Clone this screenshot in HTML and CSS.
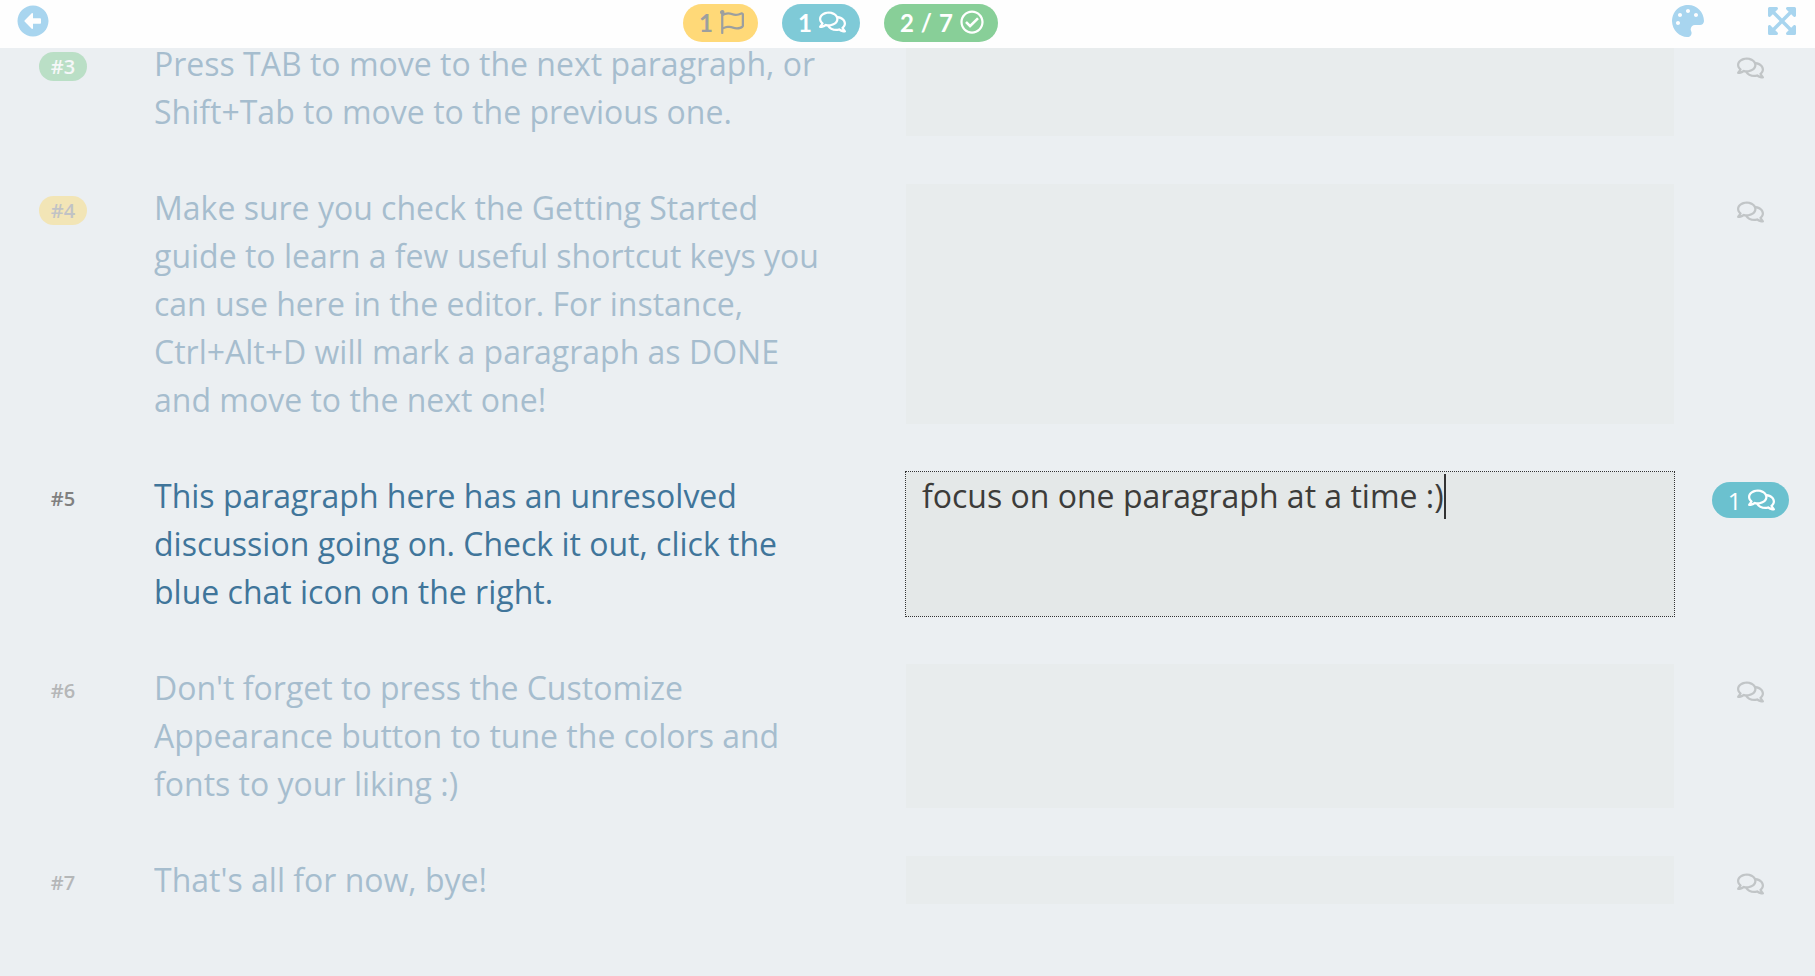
FILE: index.html
```
<!DOCTYPE html>
<html lang="en">
<head>
    <meta charset="UTF-8">
    <meta name="viewport" content="width=device-width, initial-scale=1.0">
    <title>Translation Editor</title>
    <link rel="stylesheet" href="styles.css">
</head>
<body>
    <svg class="sprite" aria-hidden="true">
        <symbol id="comments" viewBox="0 0 576 512"><path d="M532 386.2c27.5-27.1 44-61.1 44-98.2 0-80-76.5-146.1-176.2-157.9C368.3 72.5 294.3 32 208 32 93.1 32 0 103.6 0 192c0 37 16.5 71 44 98.2-15.3 30.7-37.3 54.5-37.7 54.9-6.3 6.7-8.1 16.5-4.4 25 3.6 8.5 12 14 21.2 14 53.5 0 96.7-20.2 125.2-38.8 9.2 2.1 18.7 3.7 28.4 4.9C208.1 407.6 281.8 448 368 448c20.8 0 40.8-2.4 59.8-6.8C456.3 459.7 499.4 480 553 480c9.2 0 17.5-5.5 21.2-14 3.6-8.5 1.9-18.3-4.4-25-.4-.3-22.5-24.1-37.8-54.8zm-392.8-92.3L122.1 305c-14.1 9.1-28.5 16.3-43.1 21.4 2.7-4.7 5.4-9.7 8-14.8l15.5-31.1L77.7 256C64.2 242.6 48 220.7 48 192c0-60.7 73.3-112 160-112s160 51.3 160 112-73.3 112-160 112c-16.5 0-33-1.9-49-5.6l-19.8-4.5zM498.3 352l-24.7 24.4 15.5 31.1c2.6 5.1 5.3 10.1 8 14.8-14.6-5.1-29-12.3-43.1-21.4l-17.1-11.1-19.9 4.6c-16 3.7-32.5 5.6-49 5.6-54 0-102.2-20.1-131.3-49.7C338 339.5 416 272.9 416 192c0-3.4-.4-6.7-.7-10C479.7 196.5 528 238.8 528 288c0 28.7-16.2 50.6-29.7 64z"/></symbol>
    </svg>

    <header class="topbar">
        <a href="#" class="tool" aria-label="Back">
            <svg class="icon-lg" viewBox="0 0 512 512"><path d="M256 504C119 504 8 393 8 256S119 8 256 8s248 111 248 248-111 248-248 248zm116-292H256v-70.9c0-10.7-13-16.1-20.5-8.5L121.2 247.5c-4.7 4.7-4.7 12.2 0 16.9l114.3 114.9c7.6 7.6 20.5 2.2 20.5-8.5V300h116c6.6 0 12-5.4 12-12v-64c0-6.6-5.4-12-12-12z"/></svg>
        </a>
        <div class="stats">
            <button class="stat flagged" aria-label="1 flagged">1
                <svg class="icon" viewBox="0 0 512 512"><path d="M336.174 80c-49.132 0-93.305-32-161.913-32-31.301 0-58.303 6.482-80.721 15.168a48.04 48.04 0 0 0 2.142-20.727C93.067 19.575 74.167 1.594 51.201.104 23.242-1.71 0 20.431 0 48c0 17.764 9.657 33.262 24 41.562V496c0 8.837 7.163 16 16 16h16c8.837 0 16-7.163 16-16v-83.443C109.869 395.28 143.259 384 199.826 384c49.132 0 93.305 32 161.913 32 58.479 0 101.972-22.617 128.548-39.981C503.846 367.161 512 352.051 512 335.855V95.937c0-34.459-35.264-57.768-66.904-44.117C409.193 67.309 371.641 80 336.174 80zM464 336c-21.783 15.412-60.824 32-102.261 32-59.945 0-102.002-32-161.913-32-43.361 0-96.379 9.403-127.826 24V128c21.784-15.412 60.824-32 102.261-32 59.945 0 102.002 32 161.913 32 43.271 0 96.32-17.366 127.826-32v240z"/></svg>
            </button>
            <button class="stat discussed" aria-label="1 discussion">1
                <svg class="icon wide"><use href="#comments"/></svg>
            </button>
            <button class="stat done" aria-label="2 of 7 done">
                <span>2</span> <span>/</span> <span>7</span>
                <svg class="icon" viewBox="0 0 512 512"><path d="M256 8C119.033 8 8 119.033 8 256s111.033 248 248 248 248-111.033 248-248S392.967 8 256 8zm0 48c110.532 0 200 89.451 200 200 0 110.532-89.451 200-200 200-110.532 0-200-89.451-200-200 0-110.532 89.451-200 200-200m140.204 130.267l-22.536-22.718c-4.667-4.705-12.265-4.736-16.97-.068L215.346 303.697l-59.792-60.277c-4.667-4.705-12.265-4.736-16.97-.069l-22.719 22.536c-4.705 4.667-4.736 12.265-.068 16.971l90.781 91.516c4.667 4.705 12.265 4.736 16.97.068l172.589-171.204c4.704-4.668 4.734-12.266.066-16.971z"/></svg>
            </button>
        </div>
        <div class="tools">
            <button class="tool" aria-label="Customize Appearance">
                <svg class="icon-lg" viewBox="0 0 512 512"><path d="M204.3 5C104.9 24.4 24.8 104.3 5.2 203.4c-37 187 131.7 326.4 258.8 306.7 41.2-6.4 61.4-54.6 42.5-91.7-23.1-45.4 9.9-98.4 60.9-98.4h79.7c35.8 0 64.8-29.6 64.9-65.3C511.5 97.1 368.1-26.9 204.3 5zM96 320c-17.7 0-32-14.3-32-32s14.3-32 32-32 32 14.3 32 32-14.3 32-32 32zm32-128c-17.7 0-32-14.3-32-32s14.3-32 32-32 32 14.3 32 32-14.3 32-32 32zm128-64c-17.7 0-32-14.3-32-32s14.3-32 32-32 32 14.3 32 32-14.3 32-32 32zm128 64c-17.7 0-32-14.3-32-32s14.3-32 32-32 32 14.3 32 32-14.3 32-32 32z"/></svg>
            </button>
            <button class="tool" aria-label="Full screen">
                <svg class="icon-lg" viewBox="0 0 448 512"><path d="M448 344v112a23.94 23.94 0 0 1-24 24H312c-21.39 0-32.09-25.9-17-41l36.2-36.2L224 295.6 116.77 402.9 153 439c15.09 15.1 4.39 41-17 41H24a23.94 23.94 0 0 1-24-24V344c0-21.4 25.89-32.1 41-17l36.19 36.2L184.46 256 77.18 148.7 41 185c-15.1 15.1-41 4.4-41-17V56a23.94 23.94 0 0 1 24-24h112c21.39 0 32.09 25.9 17 41l-36.2 36.2L224 216.4l107.23-107.3L295 73c-15.09-15.1-4.39-41 17-41h112a23.94 23.94 0 0 1 24 24v112c0 21.4-25.89 32.1-41 17l-36.19-36.2L263.54 256l107.28 107.3L407 327.1c15.1-15.2 41-4.5 41 16.9z"/></svg>
            </button>
        </div>
    </header>

    <main class="paragraphs">
        <section class="row">
            <div class="side"><span class="number done">#3</span></div>
            <label class="source" for="p3">Press TAB to move to the next paragraph, or Shift+Tab to move to the previous one.</label>
            <div class="target"><textarea id="p3" rows="1"></textarea></div>
            <div class="chat"><button class="comment" aria-label="Discuss #3"><svg class="icon wide"><use href="#comments"/></svg></button></div>
        </section>
        <section class="row">
            <div class="side"><span class="number flagged">#4</span></div>
            <label class="source" for="p4">Make sure you check the Getting Started guide to learn a few useful shortcut keys you can use here in the editor. For instance, Ctrl+Alt+D will mark a paragraph as DONE and move to the next one!</label>
            <div class="target"><textarea id="p4" rows="1"></textarea></div>
            <div class="chat"><button class="comment" aria-label="Discuss #4"><svg class="icon wide"><use href="#comments"/></svg></button></div>
        </section>
        <section class="row active">
            <div class="side"><span class="number">#5</span></div>
            <label class="source" for="p5">This paragraph here has an unresolved discussion going on. Check it out, click the blue chat icon on the right.</label>
            <div class="target">
                <textarea id="p5" rows="1" spellcheck="false">focus on one paragraph at a time :)</textarea>
                <span class="caret"></span>
            </div>
            <div class="chat"><button class="comment open" aria-label="1 comment on #5">1 <svg class="icon wide"><use href="#comments"/></svg></button></div>
        </section>
        <section class="row">
            <div class="side"><span class="number">#6</span></div>
            <label class="source" for="p6">Don't forget to press the Customize Appearance button to tune the colors and fonts to your liking :)</label>
            <div class="target"><textarea id="p6" rows="1"></textarea></div>
            <div class="chat"><button class="comment" aria-label="Discuss #6"><svg class="icon wide"><use href="#comments"/></svg></button></div>
        </section>
        <section class="row">
            <div class="side"><span class="number">#7</span></div>
            <label class="source" for="p7">That's all for now, bye!</label>
            <div class="target"><textarea id="p7" rows="1"></textarea></div>
            <div class="chat"><button class="comment" aria-label="Discuss #7"><svg class="icon wide"><use href="#comments"/></svg></button></div>
        </section>
    </main>
</body>
</html>
```

FILE: styles.css
```
:root {
    --bg-color: #ebeff2;
    --text-color: #3c3c3a;
    --source-color: #40759a;
    --tool-color: #a8d5ef;
    --yellow: #ffd978;
    --blue: #7fcad7;
    --green: #88cf98;
}

* {
    box-sizing: border-box;
}

body {
    margin: 0;
    background-color: var(--bg-color);
    color: var(--text-color);
    font-family: "Open Sans", sans-serif;
}

button {
    border: none;
    background: none;
    padding: 0;
    cursor: pointer;
}

svg {
    display: block;
    fill: currentColor;
}

.sprite {
    display: none;
}

.icon {
    width: 24px;
    height: 24px;
}

.icon.wide {
    width: 27px;
}

.icon-lg {
    width: 32px;
    height: 32px;
}

/* top bar */
.topbar {
    position: fixed;
    top: 0;
    left: 0;
    right: 0;
    z-index: 1;
    display: flex;
    justify-content: space-between;
    align-items: flex-start;
    height: 48px;
    background-color: #fefefe;
}

.tool {
    display: flex;
    justify-content: center;
    width: 66px;
    padding-top: 5px;
    color: var(--tool-color);
}

.tools {
    display: flex;
    gap: 28px;
}

.stats {
    display: flex;
    gap: 24px;
    padding-top: 4px;
    margin-right: 40px;
}

.stat {
    display: flex;
    align-items: center;
    gap: 7px;
    height: 38px;
    padding: 0 14px 2px 16px;
    border-radius: 19px;
    color: #fff;
    font-family: Lato, sans-serif;
    font-size: 24px;
    font-weight: 700;
}

.stat.flagged {
    background-color: var(--yellow);
    color: #9c9f9f;
}

.stat.discussed {
    background-color: var(--blue);
}

.stat.done {
    background-color: var(--green);
}

/* paragraphs */
.paragraphs {
    display: flex;
    flex-direction: column;
    gap: 48px;
    padding: 40px 0 72px;
}

.row {
    display: grid;
    grid-template-columns: 138px 1fr 1fr 141px;
    font-size: 32px;
    line-height: 48px;
}

.side {
    display: flex;
    justify-content: center;
    align-items: flex-start;
    padding: 12px 12px 0 0;
    opacity: 0.5;
}

.number {
    padding: 0 12px;
    border-radius: 15px;
    color: #808080;
    font-size: 20px;
    font-weight: 600;
    line-height: 29px;
}

.number.done {
    background-color: #8bd09b;
    color: #fff;
}

.number.flagged {
    background-color: #f9dc7c;
    color: #999;
}

.source {
    padding: 0 64px 0 16px;
    color: var(--source-color);
    opacity: 0.4;
}

.target {
    position: relative;
    display: flex;
}

.target textarea {
    width: 100%;
    height: 100%;
    padding: 0 16px;
    border: none;
    outline: none;
    resize: none;
    overflow: hidden;
    background-color: #e8eced;
    color: inherit;
    font: inherit;
}

.chat {
    display: flex;
    justify-content: center;
    align-items: flex-start;
    padding: 10px 0 0 12px;
}

.comment {
    display: flex;
    align-items: center;
    gap: 7px;
    height: 36px;
    color: #c1c5c7;
    font-family: inherit;
    font-size: 24px;
    font-weight: 500;
}

.comment.open {
    padding: 0 14px 0 16px;
    border-radius: 18px;
    background-color: #6bc1cf;
    color: #fff;
}

.row.active .side,
.row.active .source {
    opacity: 1;
}

.row.active textarea {
    background-color: #e4e8e8;
    outline: 1px dotted #333;
}

/* text cursor at the end of the typed line */
.caret {
    position: absolute;
    top: 2px;
    left: 538px;
    width: 2px;
    height: 45px;
    background-color: #333;
}
```
